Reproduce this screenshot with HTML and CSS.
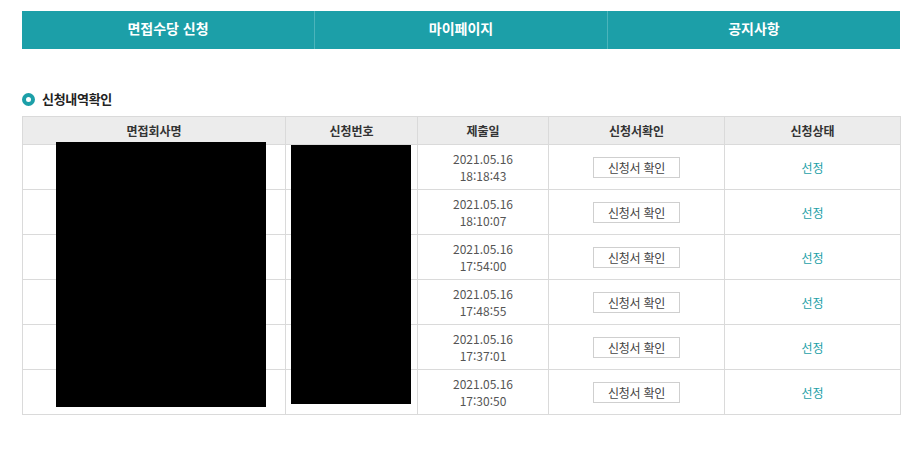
FILE: index.html
```html
<!DOCTYPE html>
<html lang="ko">
<head>
<meta charset="utf-8">
<link rel="stylesheet" href="styles.css">
</head>
<body>
<div class="page">
  <nav class="gnb">
    <a class="gnb-item">면접수당 신청</a>
    <a class="gnb-item">마이페이지</a>
    <a class="gnb-item">공지사항</a>
  </nav>
  <h2 class="sec-title"><span class="dot"></span>신청내역확인</h2>
  <div class="table-wrap">
    <table class="list">
      <colgroup>
        <col class="c1"><col class="c2"><col class="c3"><col class="c4"><col class="c5">
      </colgroup>
      <thead>
        <tr><th>면접회사명</th><th>신청번호</th><th>제출일</th><th>신청서확인</th><th>신청상태</th></tr>
      </thead>
      <tbody>
        <tr><td></td><td></td><td>2021.05.16<br>18:18:43</td><td><button class="btn">신청서 확인</button></td><td class="st">선정</td></tr>
        <tr><td></td><td></td><td>2021.05.16<br>18:10:07</td><td><button class="btn">신청서 확인</button></td><td class="st">선정</td></tr>
        <tr><td></td><td></td><td>2021.05.16<br>17:54:00</td><td><button class="btn">신청서 확인</button></td><td class="st">선정</td></tr>
        <tr><td></td><td></td><td>2021.05.16<br>17:48:55</td><td><button class="btn">신청서 확인</button></td><td class="st">선정</td></tr>
        <tr><td></td><td></td><td>2021.05.16<br>17:37:01</td><td><button class="btn">신청서 확인</button></td><td class="st">선정</td></tr>
        <tr><td></td><td></td><td>2021.05.16<br>17:30:50</td><td><button class="btn">신청서 확인</button></td><td class="st">선정</td></tr>
      </tbody>
    </table>
    <div class="redact redact-a"></div>
    <div class="redact redact-b"></div>
  </div>
</div>
</body>
</html>
```
FILE: styles.css
```css
* { box-sizing: border-box; }
html, body { margin: 0; padding: 0; background: #fff; }
body {
  font-family: "Noto Sans CJK KR", "Noto Sans", sans-serif;
  color: #333;
}
.page {
  width: 878px;
  margin-left: 22px;
  padding-top: 11px;
}
.gnb {
  display: flex;
  height: 38px;
  background: #1c9fa8;
}
.gnb-item {
  flex: 1;
  display: flex;
  align-items: center;
  justify-content: center;
  color: #fff;
  font-size: 14px;
  font-weight: 700;
  padding-bottom: 4px;
  border-left: 1px solid #4bb4bb;
}
.gnb-item:first-child { border-left: none; }
.sec-title {
  display: flex;
  align-items: center;
  margin: 42px 0 0 0;
  height: 16px;
  font-size: 13px;
  font-weight: 700;
  color: #222;
  line-height: 16px;
  letter-spacing: -0.3px;
}
.dot {
  width: 13px;
  height: 13px;
  border-radius: 50%;
  border: 4px solid #1c9fa8;
  background: #fff;
  margin-right: 7px;
  margin-top: 1px;
}
.table-wrap {
  position: relative;
  margin-top: 9px;
}
.list {
  width: 878px;
  border-collapse: collapse;
  table-layout: fixed;
  font-size: 12px;
}
.c1 { width: 263px; }
.c2 { width: 132px; }
.c3 { width: 131px; }
.c4 { width: 176px; }
.c5 { width: 176px; }
.list th, .list td {
  border: 1px solid #dadada;
  text-align: center;
  padding: 0;
}
.list th {
  background: #ececec;
  height: 28px;
  font-weight: 700;
  color: #333;
  font-size: 12px;
}
.list td {
  height: 45px;
  color: #555;
  line-height: 17px;
}
.btn {
  width: 87px;
  height: 21px;
  border: 1px solid #cfcfcf;
  background: #fff;
  font-family: inherit;
  font-size: 12px;
  color: #444;
  padding: 0;
  letter-spacing: -0.3px;
}
.list td.st { color: #1c9fa8; }
.redact {
  position: absolute;
  background: #000;
}
.redact-a { left: 34px; top: 26px; width: 210px; height: 265px; }
.redact-b { left: 269px; top: 29px; width: 120px; height: 259px; }
```
